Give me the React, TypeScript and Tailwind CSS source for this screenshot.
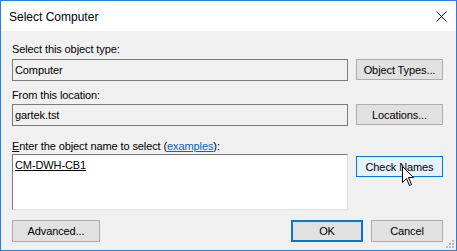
import React from 'react'

const btn =
  'flex items-center justify-center h-[22px] border border-[#adadad] bg-[#e1e1e1] text-[11px] text-black'

function ReadonlyBox({ value }: { value: string }) {
  return (
    <div className="w-[336px] h-[22px] border border-[#7a7a7a] bg-[#f0f0f0] flex items-center pl-[2px] text-[11px] leading-[14px]">
      {value}
    </div>
  )
}

export default function App() {
  return (
    <div className="w-[457px] h-[251px] border border-[#2a7fd4] bg-[#f0f0f0] flex flex-col font-['Liberation_Sans',Arial,sans-serif] text-black relative overflow-hidden">
      {/* title bar */}
      <div className="h-[30px] bg-white flex items-center justify-between pl-[8px] pr-[9px] shrink-0">
        <span className="text-[12px] leading-[14px] mt-[1px]">Select Computer</span>
        <svg width="11" height="11" viewBox="0 0 11 11">
          <path d="M0.5 0.5 L10.5 10.5 M10.5 0.5 L0.5 10.5" stroke="#111" strokeWidth="1" />
        </svg>
      </div>

      <div className="flex flex-col pl-[11px] pt-[11px] text-[11px] leading-[14px] tracking-[-0.1px]">
        <div className="h-[14px]">Select this object type:</div>
        <div className="flex gap-[8px] mt-[3px]">
          <ReadonlyBox value="Computer" />
          <button className={`${btn} w-[87px] !h-[21px]`}>Object Types...</button>
        </div>

        <div className="h-[14px] mt-[7px]">From this location:</div>
        <div className="flex gap-[8px] mt-[2px]">
          <ReadonlyBox value="gartek.tst" />
          <button className={`${btn} w-[87px] !h-[21px]`}>Locations...</button>
        </div>

        <div className="h-[14px] mt-[13px]">
          <span className="underline">E</span>nter the object name to select (
          <span className="text-[#0066cc] underline">examples</span>):
        </div>
        <div className="flex gap-[8px] mt-[1px] items-start">
          <div className="w-[336px] h-[56px] bg-white border-t border-l border-t-[#7a7a7a] border-l-[#7a7a7a] border-r border-b border-r-[#dcdcdc] border-b-[#e3e3e3] pl-[2px] pt-[3px]">
            <span className="underline">CM-DWH-CB1</span>
          </div>
          <button className={`${btn} w-[87px] mt-[2px] !h-[21px] !border-[#0078d7] !bg-[#e5f1fb]`}>Check Names</button>
        </div>

        <div className="flex mt-[10px] items-center">
          <button className={`${btn} w-[88px]`}>Advanced...</button>
          <div className="flex-1" />
          <button className={`${btn} w-[72px] !border-2 !border-[#0078d7]`}>OK</button>
          <button className={`${btn} w-[72px] ml-[8px] mr-[13px]`}>Cancel</button>
        </div>
      </div>

      {/* mouse pointer */}
      <svg
        width="13"
        height="21"
        viewBox="0 0 13 21"
        className="absolute left-[401px] top-[165px]"
      >
        <path
          d="M0.5 0.5 L0.5 16.5 L4.5 12.5 L7.5 19.5 L9.5 18.5 L6.5 11.5 L11.5 11.5 Z"
          fill="#fff"
          stroke="#000"
          strokeWidth="1"
        />
      </svg>

      {/* resize grip */}
      <svg width="8" height="8" viewBox="0 0 8 8" className="absolute right-[2px] bottom-[2px]">
        <rect x="6" y="0" width="2" height="2" fill="#bcbcbc" />
        <rect x="3" y="3" width="2" height="2" fill="#bcbcbc" />
        <rect x="6" y="3" width="2" height="2" fill="#bcbcbc" />
        <rect x="0" y="6" width="2" height="2" fill="#bcbcbc" />
        <rect x="3" y="6" width="2" height="2" fill="#bcbcbc" />
        <rect x="6" y="6" width="2" height="2" fill="#bcbcbc" />
      </svg>
    </div>
  )
}
